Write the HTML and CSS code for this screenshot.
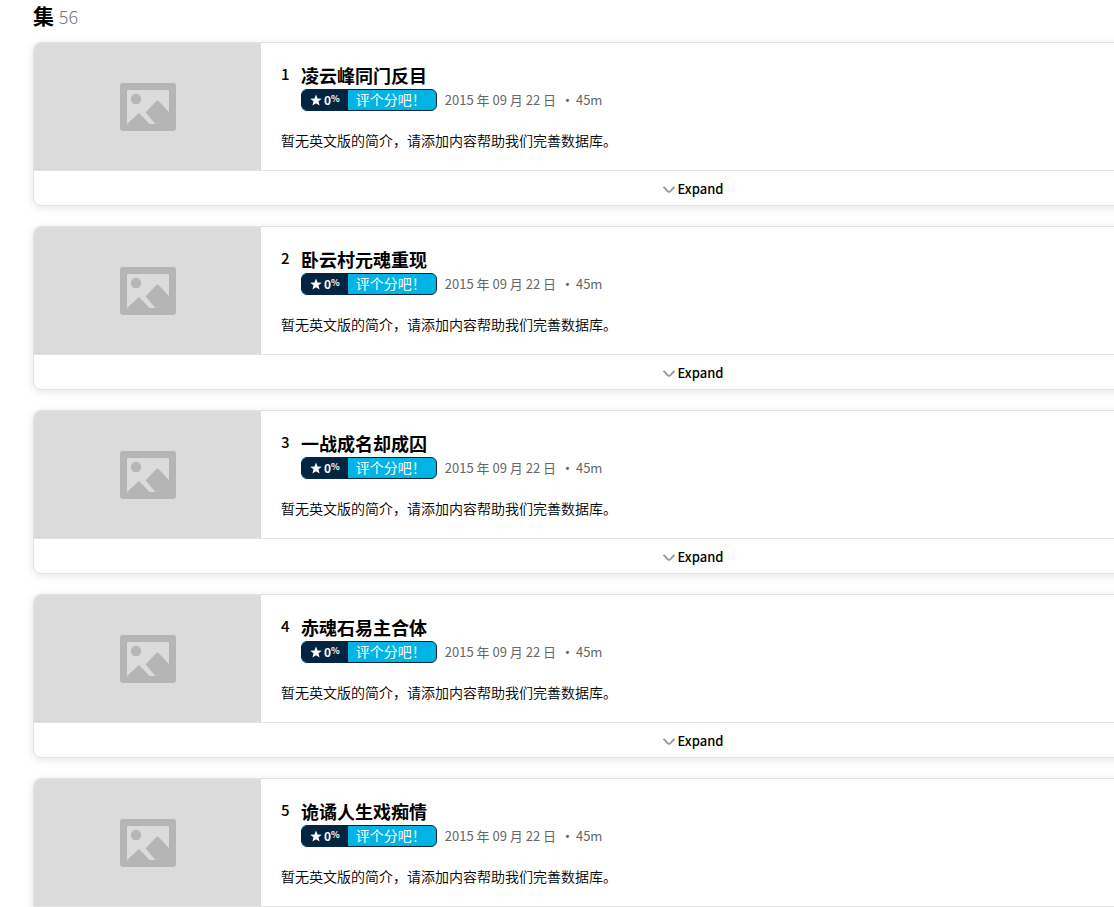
FILE: index.html
```
<!DOCTYPE html>
<html lang="zh-CN">

<head>
  <meta charset="UTF-8">
  <meta name="viewport" content="width=device-width, initial-scale=1.0">
  <title>集</title>
  <link rel="stylesheet" href="styles.css">
</head>

<body>
  <!-- Shared icons -->
  <svg class="icon-defs" aria-hidden="true">
    <symbol id="icon-picture" viewBox="0 0 56 48">
      <path fill-rule="evenodd" d="M3 0h50a3 3 0 0 1 3 3v42a3 3 0 0 1-3 3H3a3 3 0 0 1-3-3V3a3 3 0 0 1 3-3zM7 7v34l12-11 10.500 11h6L25.500 29.500 37.500 17 49 29V7z" />
      <circle cx="16" cy="16" r="5.200" />
    </symbol>
    <symbol id="icon-star" viewBox="0 0 24 24">
      <path d="M12 1l3.100 7.900 8.400.5-6.500 5.300 2.200 8.200L12 18.300l-7.200 4.600L7 14.700.5 9.400l8.400-.5z" />
    </symbol>
    <symbol id="icon-chevron" viewBox="0 0 12 8">
      <path d="M1.200 1.500C3 3 4.500 6 6 6s3-3 4.800-4.500" fill="none" stroke="currentColor" stroke-width="2" stroke-linecap="round" />
    </symbol>
  </svg>

  <main class="episodes">
    <h1 class="episodes-title">集 <span class="count">56</span></h1>

    <div class="episode-list">
      <article class="card">
        <div class="episode">
          <div class="image"><svg class="picture"><use href="#icon-picture" /></svg></div>
          <div class="info">
            <div class="heading">
              <span class="number">1</span>
              <div class="title">
                <h2>凌云峰同门反目</h2>
                <div class="meta">
                  <button class="rating" type="button">
                    <span class="score"><svg class="star"><use href="#icon-star" /></svg>0<span class="percent">%</span></span>
                    <span class="rate">评个分吧！</span>
                  </button>
                  <span class="date">2015 年 09 月 22 日</span>
                  <span class="runtime">45m</span>
                </div>
              </div>
            </div>
            <p class="overview">暂无英文版的简介，请添加内容帮助我们完善数据库。</p>
          </div>
        </div>
        <button class="expand" type="button"><svg class="chevron"><use href="#icon-chevron" /></svg>Expand</button>
      </article>

      <article class="card">
        <div class="episode">
          <div class="image"><svg class="picture"><use href="#icon-picture" /></svg></div>
          <div class="info">
            <div class="heading">
              <span class="number">2</span>
              <div class="title">
                <h2>卧云村元魂重现</h2>
                <div class="meta">
                  <button class="rating" type="button">
                    <span class="score"><svg class="star"><use href="#icon-star" /></svg>0<span class="percent">%</span></span>
                    <span class="rate">评个分吧！</span>
                  </button>
                  <span class="date">2015 年 09 月 22 日</span>
                  <span class="runtime">45m</span>
                </div>
              </div>
            </div>
            <p class="overview">暂无英文版的简介，请添加内容帮助我们完善数据库。</p>
          </div>
        </div>
        <button class="expand" type="button"><svg class="chevron"><use href="#icon-chevron" /></svg>Expand</button>
      </article>

      <article class="card">
        <div class="episode">
          <div class="image"><svg class="picture"><use href="#icon-picture" /></svg></div>
          <div class="info">
            <div class="heading">
              <span class="number">3</span>
              <div class="title">
                <h2>一战成名却成囚</h2>
                <div class="meta">
                  <button class="rating" type="button">
                    <span class="score"><svg class="star"><use href="#icon-star" /></svg>0<span class="percent">%</span></span>
                    <span class="rate">评个分吧！</span>
                  </button>
                  <span class="date">2015 年 09 月 22 日</span>
                  <span class="runtime">45m</span>
                </div>
              </div>
            </div>
            <p class="overview">暂无英文版的简介，请添加内容帮助我们完善数据库。</p>
          </div>
        </div>
        <button class="expand" type="button"><svg class="chevron"><use href="#icon-chevron" /></svg>Expand</button>
      </article>

      <article class="card">
        <div class="episode">
          <div class="image"><svg class="picture"><use href="#icon-picture" /></svg></div>
          <div class="info">
            <div class="heading">
              <span class="number">4</span>
              <div class="title">
                <h2>赤魂石易主合体</h2>
                <div class="meta">
                  <button class="rating" type="button">
                    <span class="score"><svg class="star"><use href="#icon-star" /></svg>0<span class="percent">%</span></span>
                    <span class="rate">评个分吧！</span>
                  </button>
                  <span class="date">2015 年 09 月 22 日</span>
                  <span class="runtime">45m</span>
                </div>
              </div>
            </div>
            <p class="overview">暂无英文版的简介，请添加内容帮助我们完善数据库。</p>
          </div>
        </div>
        <button class="expand" type="button"><svg class="chevron"><use href="#icon-chevron" /></svg>Expand</button>
      </article>

      <article class="card">
        <div class="episode">
          <div class="image"><svg class="picture"><use href="#icon-picture" /></svg></div>
          <div class="info">
            <div class="heading">
              <span class="number">5</span>
              <div class="title">
                <h2>诡谲人生戏痴情</h2>
                <div class="meta">
                  <button class="rating" type="button">
                    <span class="score"><svg class="star"><use href="#icon-star" /></svg>0<span class="percent">%</span></span>
                    <span class="rate">评个分吧！</span>
                  </button>
                  <span class="date">2015 年 09 月 22 日</span>
                  <span class="runtime">45m</span>
                </div>
              </div>
            </div>
            <p class="overview">暂无英文版的简介，请添加内容帮助我们完善数据库。</p>
          </div>
        </div>
        <button class="expand" type="button"><svg class="chevron"><use href="#icon-chevron" /></svg>Expand</button>
      </article>
    </div>
  </main>
</body>

</html>
```

FILE: styles.css
```
* {
  box-sizing: border-box;
}

html {
  height: 100%;
  overflow: hidden;
}

body {
  margin: 0;
  height: 100%;
  overflow: auto;
  scrollbar-width: none;
  background: #fff;
  color: #000;
  font-family: "Noto Sans CJK SC", "Noto Sans", sans-serif;
  font-size: 14px;
}

button {
  padding: 0;
  border: none;
  background: none;
  color: inherit;
  font: inherit;
  cursor: pointer;
}

.icon-defs {
  display: none;
}

.episodes {
  padding: 1px 0 20px 33px;
}

.episodes-title {
  margin: 0 0 12px;
  font-size: 21px;
  line-height: 28px;
  font-weight: 700;
}

.count {
  color: #777;
  font-size: 18px;
  font-weight: 300;
}

/* The list runs on past the right edge of the window */
.episode-list {
  display: flex;
  flex-direction: column;
  gap: 20px;
  margin-right: -239px;
}

.card {
  border: 1px solid #e3e3e3;
  border-radius: 8px;
  box-shadow: 0 2px 8px rgba(0, 0, 0, 0.1);
  background: #fff;
  overflow: hidden;
}

.episode {
  display: flex;
  border-bottom: 1px solid #e3e3e3;
}

.image {
  display: flex;
  align-items: center;
  justify-content: center;
  flex: 0 0 227px;
  min-height: 127px;
  background: #dbdbdb;
}

.picture {
  width: 56px;
  height: 48px;
  fill: #b5b5b5;
}

.info {
  flex: 1;
  padding: 22px 20px 0;
}

.heading {
  display: flex;
}

.number {
  flex: 0 0 20px;
  font-size: 15px;
  line-height: 18px;
  font-weight: 500;
}

.title h2 {
  margin: 0 0 4px;
  font-size: 18px;
  line-height: 20px;
  font-weight: 700;
}

.meta {
  display: flex;
  align-items: center;
  color: #666;
  font-size: 13px;
  line-height: 22px;
}

.rating {
  display: flex;
  height: 22px;
  margin-right: 8px;
  border: 1px solid #032541;
  border-radius: 6px;
  background: #01b4e4;
  color: #fff;
  line-height: 20px;
  overflow: hidden;
}

.score {
  display: flex;
  align-items: center;
  padding: 0 8px;
  background: #032541;
  font-size: 12px;
  font-weight: 700;
}

.star {
  width: 12px;
  height: 12px;
  margin-right: 2px;
  fill: #fff;
}

.percent {
  padding-bottom: 2px;
  font-size: 9px;
}

.rate {
  padding: 0 10px 0 8px;
  font-size: 14px;
  line-height: 18px;
}

.runtime::before {
  content: "•";
  margin: 0 6px 0 9px;
  font-family: "Noto Sans", sans-serif;
}

.overview {
  margin: 20px 0 0;
  font-weight: 350;
  line-height: 18px;
}

.expand {
  display: flex;
  align-items: center;
  justify-content: center;
  gap: 3px;
  width: 100%;
  height: 34px;
  font-size: 13px;
  font-weight: 500;
}

.chevron {
  width: 12px;
  height: 8px;
  margin-top: 3px;
  color: #999;
}
```
